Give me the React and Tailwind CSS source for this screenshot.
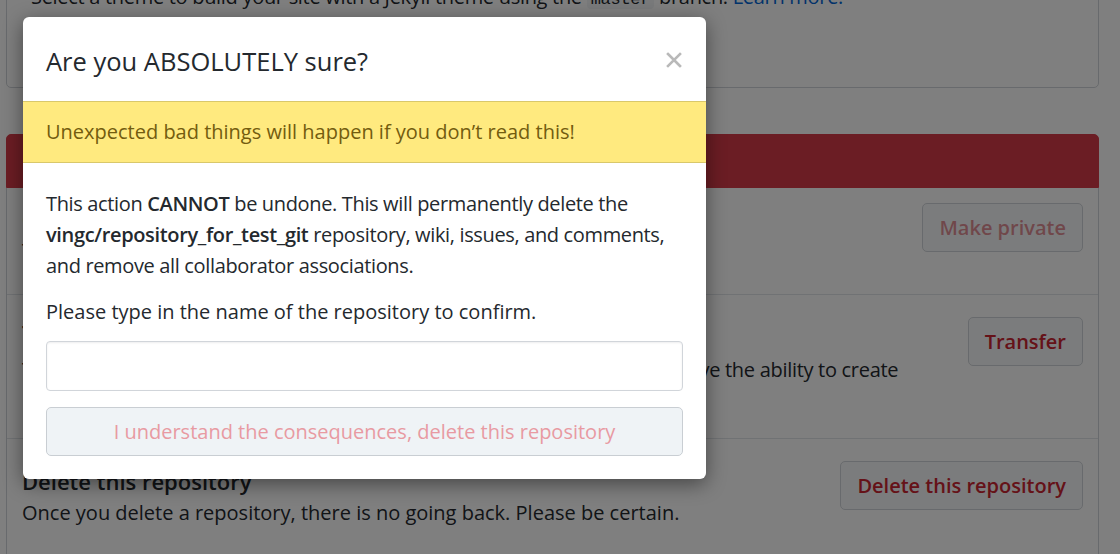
import React from "react";

const font = { fontFamily: '"Open Sans", "Noto Sans", sans-serif' };

function DangerRow({ title, children, button, disabled, className }) {
  return (
    <div className={"flex items-start justify-between border-t border-[#e1e4e8] px-[15px] " + (className || "")}>
      <div className="text-[20px] leading-[31px] text-[#24292e]">
        <div className="font-semibold text-[22px] leading-[32px]">{title}</div>
        <div>{children}</div>
      </div>
      <button
        className={
          "shrink-0 h-[49px] px-[16px] rounded-[5px] border border-[#d1d5da] bg-[#f6f8fa] text-[20px] font-semibold " +
          (disabled ? "text-[#cb2431]/50" : "text-[#cb2431]")
        }
      >
        {button}
      </button>
    </div>
  );
}

export default function App() {
  return (
    <div className="relative h-[554px] w-[1120px] overflow-hidden bg-white" style={font}>
      {/* underlying page */}
      <div className="ml-[6px] w-[1093px] -mt-[40px]">
        <div className="h-[128px] rounded-[5px] border border-[#d1d5da] px-[24px] pt-[21px] text-[20px] leading-[30px] text-[#24292e] tracking-[-0.3px]">
          Select a theme to build your site with a Jekyll theme using the{" "}
          <code className="rounded bg-[#f3f4f6] px-1 font-mono text-[17px]">master</code> branch.{" "}
          <span className="text-[#0366d6]">Learn more.</span>
        </div>
        <div className="mt-[46px]">
          <div className="flex h-[54px] items-center rounded-t-[5px] border border-[#d73a49] bg-[#d73a49] px-[15px] text-[20px] font-semibold text-white">
            Danger Zone
          </div>
          <div className="border-x border-[#d1d5da]">
            <DangerRow
              title="Change repository visibility"
              button="Make private"
              disabled
              className="h-[106px] border-t-0 pt-[15px]"
            >
              This repository is currently public.
            </DangerRow>
            <DangerRow title="Transfer ownership" button="Transfer" className="h-[144px] pt-[22px]">
              <span className="block w-[910px] mt-[5px] tracking-[-0.3px]">
                Transfer this repository to another user or to an organization where you have the ability to create
                repositories.
              </span>
            </DangerRow>
            <div className="flex h-[140px] items-start justify-between border-t border-[#e1e4e8] px-[15px] pt-[22px]">
              <div className="text-[#24292e]">
                <div className="text-[22px] font-semibold leading-[32px] mt-[4px]">Delete this repository</div>
                <div className="text-[20px] leading-[31px]">
                  Once you delete a repository, there is no going back. Please be certain.
                </div>
              </div>
              <button className="h-[49px] px-[16px] rounded-[5px] border border-[#d1d5da] bg-[#f6f8fa] text-[20px] font-semibold text-[#cb2431]">
                Delete this repository
              </button>
            </div>
          </div>
        </div>
      </div>

      {/* overlay */}
      <div className="absolute inset-0 bg-black/50" />

      {/* modal */}
      <div className="absolute left-[23px] top-[17px] w-[683px] overflow-hidden rounded-[6px] bg-white shadow-[0_5px_20px_rgba(0,0,0,0.45)]">
        <div className="flex h-[84px] items-center justify-between pl-[23px] pr-[24px] pt-[5px]">
          <h2 className="text-[25.5px] font-normal text-[#24292e]">Are you ABSOLUTELY sure?</h2>
          <svg width="16" height="16" viewBox="0 0 16 16" className="mt-[-3px]">
            <path d="M2 2 L14 14 M14 2 L2 14" stroke="#b9b9b9" strokeWidth="2.6" strokeLinecap="square" />
          </svg>
        </div>
        <div className="flex h-[62px] items-center border-y border-[#d9c86b] bg-[#ffea7f] px-[23px] text-[20px] text-[#735c0f]">
          Unexpected bad things will happen if you don’t read this!
        </div>
        <div className="px-[23px] pt-[25px] pb-[23px] text-[20px] leading-[31px] text-[#24292e]">
          <p className="tracking-[-0.35px]">
            This action <strong className="font-semibold">CANNOT</strong> be undone. This will permanently delete the{" "}
            <strong className="font-semibold">vingc/repository_for_test_git</strong> repository, wiki, issues, and
            comments, and remove all collaborator associations.
          </p>
          <p className="mt-[15px]">Please type in the name of the repository to confirm.</p>
          <input
            type="text"
            className="mt-[14px] block h-[50px] w-full rounded-[4px] border border-[#d1d5da] bg-white shadow-[inset_0_1px_2px_rgba(27,31,35,0.075)] outline-none"
          />
          <button
            disabled
            className="mt-[16px] block h-[49px] w-full rounded-[5px] border border-[#c9ced3] bg-[#eff3f6] text-[20px] text-[#e89aa2]"
          >
            I understand the consequences, delete this repository
          </button>
        </div>
      </div>
    </div>
  );
}
